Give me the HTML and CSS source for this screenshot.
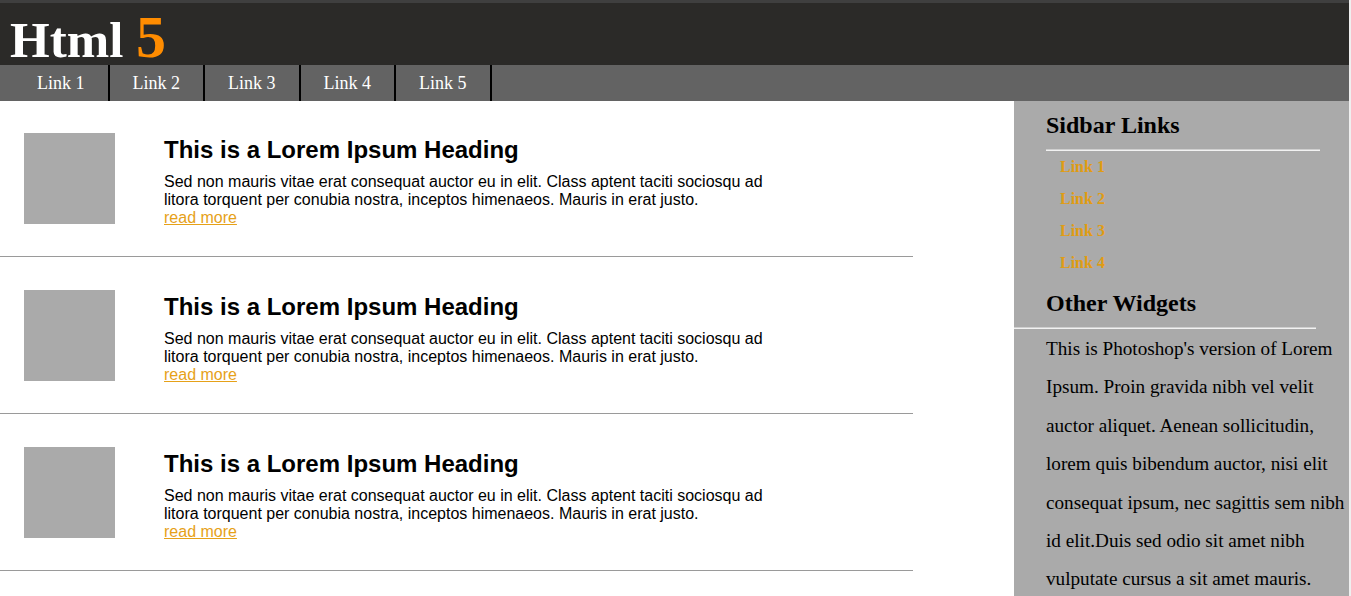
FILE: index.html
```html
<!DOCTYPE html>
<html lang="en">
<head>
<meta charset="utf-8">
<title>Html 5</title>
<link rel="stylesheet" href="styles.css">
</head>
<body>
<div class="page">
  <header class="masthead">
    <h1 class="logo">Html <span class="logo-num">5</span></h1>
  </header>
  <nav class="topnav">
    <ul class="topnav-list">
      <li><a class="topnav-link" href="#">Link 1</a></li>
      <li><a class="topnav-link" href="#">Link 2</a></li>
      <li><a class="topnav-link" href="#">Link 3</a></li>
      <li><a class="topnav-link" href="#">Link 4</a></li>
      <li><a class="topnav-link" href="#">Link 5</a></li>
    </ul>
  </nav>
  <div class="layout">
    <main class="content">
      <article class="post">
        <div class="thumb"></div>
        <div class="post-body">
          <h2 class="post-title">This is a Lorem Ipsum Heading</h2>
          <p class="post-text">Sed non mauris vitae erat consequat auctor eu in elit. Class aptent taciti sociosqu ad litora torquent per conubia nostra, inceptos himenaeos. Mauris in erat justo.<br><a class="read-more" href="#">read more</a></p>
        </div>
      </article>
      <article class="post">
        <div class="thumb"></div>
        <div class="post-body">
          <h2 class="post-title">This is a Lorem Ipsum Heading</h2>
          <p class="post-text">Sed non mauris vitae erat consequat auctor eu in elit. Class aptent taciti sociosqu ad litora torquent per conubia nostra, inceptos himenaeos. Mauris in erat justo.<br><a class="read-more" href="#">read more</a></p>
        </div>
      </article>
      <article class="post">
        <div class="thumb"></div>
        <div class="post-body">
          <h2 class="post-title">This is a Lorem Ipsum Heading</h2>
          <p class="post-text">Sed non mauris vitae erat consequat auctor eu in elit. Class aptent taciti sociosqu ad litora torquent per conubia nostra, inceptos himenaeos. Mauris in erat justo.<br><a class="read-more" href="#">read more</a></p>
        </div>
      </article>
    </main>
    <aside class="sidebar">
      <h2 class="side-title">Sidbar Links</h2>
      <div class="side-rule"></div>
      <ul class="side-links">
        <li><a class="side-link" href="#">Link 1</a></li>
        <li><a class="side-link" href="#">Link 2</a></li>
        <li><a class="side-link" href="#">Link 3</a></li>
        <li><a class="side-link" href="#">Link 4</a></li>
      </ul>
      <h2 class="side-title side-title-2">Other Widgets</h2>
      <div class="side-rule side-rule-wide"></div>
      <p class="side-text">This is Photoshop's version of Lorem Ipsum. Proin gravida nibh vel velit auctor aliquet. Aenean sollicitudin, lorem quis bibendum auctor, nisi elit consequat ipsum, nec sagittis sem nibh id elit.Duis sed odio sit amet nibh vulputate cursus a sit amet mauris.</p>
    </aside>
  </div>
</div>
</body>
</html>
```

FILE: styles.css
```css
html {
  background: #efefef;
}
body {
  margin: 0;
  font-family: "Liberation Serif", "Times New Roman", serif;
}
.page {
  width: 1349px;
  background: #ffffff;
  min-height: 596px;
  display: flex;
  flex-direction: column;
}
.masthead {
  background: #2b2a28;
  border-top: 3px solid #3f3f3f;
  height: 62px;
}
.logo {
  margin: 0;
  padding: 7px 0 0 10px;
  height: 55px;
  font-family: "Liberation Serif", "Times New Roman", serif;
  font-weight: bold;
  font-size: 51px;
  line-height: 55px;
  color: #ffffff;
}
.logo-num {
  font-size: 60px;
  color: #ff8c00;
}
.topnav {
  background: #636363;
  height: 36px;
}
.topnav-list {
  list-style: none;
  margin: 0;
  padding: 0 0 0 14px;
  display: flex;
  height: 36px;
}
.topnav-list li {
  border-right: 2px solid #000000;
}
.topnav-link {
  display: block;
  padding: 0 23px;
  line-height: 36px;
  font-size: 18px;
  color: #ffffff;
  text-decoration: none;
}
.layout {
  flex: 1;
  display: flex;
  justify-content: space-between;
}
.content {
  width: 913px;
}
.post {
  display: flex;
  align-items: flex-start;
  padding: 33px 0 29px;
  border-bottom: 1px solid #9a9a9a;
}
.post:first-child {
  padding-top: 32px;
}
.thumb {
  width: 91px;
  height: 91px;
  background: #aaaaaa;
  margin-left: 24px;
  margin-right: 49px;
  flex: none;
}
.post-body {
  font-family: "Liberation Sans", Arial, sans-serif;
}
.post-title {
  margin: 2px 0 8px;
  font-size: 24px;
  line-height: 30px;
  font-weight: bold;
  color: #000000;
}
.post-text {
  margin: 0;
  width: 600px;
  font-size: 16px;
  line-height: 18px;
  color: #000000;
}
.read-more {
  color: #e6a118;
}
.sidebar {
  width: 335px;
  background: #aaaaaa;
  padding: 0 0 0 32px;
  box-sizing: border-box;
}
.side-title {
  margin: 10px 0 10px;
  font-size: 24px;
  line-height: 28px;
  font-weight: bold;
  color: #000000;
}
.side-title-2 {
  margin-top: 10px;
  margin-bottom: 10px;
}
.side-rule {
  width: 274px;
  height: 0;
  border-top: 1px solid #cfcfcf;
  border-bottom: 1px solid #f2f2f2;
}
.side-rule-wide {
  width: 302px;
  margin-left: -32px;
}
.side-links {
  list-style: none;
  margin: 0;
  padding: 0 0 0 14px;
}
.side-link {
  display: block;
  line-height: 32px;
  font-family: "Liberation Serif", "Times New Roman", serif;
  font-size: 16px;
  font-weight: 700;
  color: #e09c14;
  text-decoration: none;
}
.side-text {
  margin: 1px 0 0;
  font-size: 19.2px;
  line-height: 38.4px;
  color: #000000;
}
```
